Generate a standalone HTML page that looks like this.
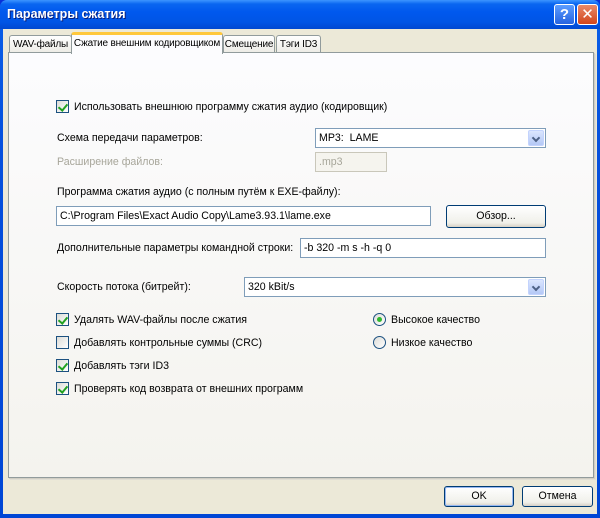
<!DOCTYPE html>
<html><head><meta charset="utf-8"><style>
*{margin:0;padding:0;box-sizing:border-box}
body{width:600px;height:518px;overflow:hidden;font-family:"Liberation Sans","DejaVu Sans",sans-serif;font-size:10.6px;color:#000;background:#0831d9}
.win{position:absolute;left:0;top:0;width:600px;height:518px;background:linear-gradient(#0a5fe8,#0550dd 30%,#0046d5);border-radius:7px 7px 0 0}
.title{position:absolute;left:0;top:0;width:600px;height:29px;background:linear-gradient(#3d95ff 0,#0a66f0 4px,#0058ee 12px,#0055e5 22px,#0048d0 29px);border-radius:7px 7px 0 0}
.title span{position:absolute;left:7px;top:7px;color:#fff;font-weight:bold;font-size:12.5px;text-shadow:1px 1px #0a1e78}
.tb{position:absolute;top:4px;width:21px;height:21px;border:1px solid #fff;border-radius:3px;color:#fff;font-weight:bold;text-align:center;font-size:15px;line-height:19px}
.client{position:absolute;left:3px;top:29px;width:594px;height:485px;background:#ece9d8}
.a{position:absolute;white-space:nowrap}
.page{position:absolute;left:8px;top:52px;width:586px;height:426px;background:linear-gradient(#fcfcfe,#f4f3ee);border:1px solid #919b9c;box-shadow:1px 1px 0 #d0cec4,2px 2px 0 #e0ded4}
.tab{position:absolute;top:35px;height:18px;border:1px solid #919b9c;border-bottom:none;border-radius:3px 3px 0 0;background:linear-gradient(#fff,#ecebe5);padding-top:3px;text-align:center;white-space:nowrap;font-size:10px;letter-spacing:-0.2px;overflow:hidden}
.tab.s{top:32px;height:22px;background:#fcfcfe;border-top:3px solid #ffc83c;padding-top:3px;z-index:2}
.cb{position:absolute;width:13px;height:13px;border:1px solid #1c5180;background:linear-gradient(135deg,#dcdcd7,#fff)}
.cb.c::after{content:"";position:absolute;left:3px;top:1px;width:4px;height:7px;border:solid #21a121;border-width:0 2px 2px 0;transform:rotate(40deg)}
.rd{position:absolute;width:13px;height:13px;border:1px solid #1c5180;border-radius:50%;background:linear-gradient(135deg,#dcdcd7,#fff)}
.rd.c::after{content:"";position:absolute;left:3px;top:3px;width:5px;height:5px;border-radius:50%;background:#2fb82f}
.ed{position:absolute;border:1px solid #7f9db9;background:#fff;padding:3px 0 0 3px;white-space:nowrap}
.dd{position:absolute;right:1px;top:1px;width:16px;height:16px;background:linear-gradient(#dbe6fe,#b4c8f6);border-radius:2px;border:1px solid #c3d3fd}
.dd::after{content:"";position:absolute;left:4px;top:4px;width:4px;height:4px;border:solid #4d6185;border-width:0 2px 2px 0;transform:rotate(45deg)}
.bt{position:absolute;border:1px solid #003c74;border-radius:3px;background:linear-gradient(#fff,#f0f0ea 80%,#d6d0c5);text-align:center}
</style></head><body>
<div class="win">
<div class="title"><span>Параметры сжатия</span>
<div class="tb" style="left:554px;background:linear-gradient(#5c9dff,#2663e0)">?</div>
<div class="tb" style="left:577px;background:linear-gradient(#e98a6a,#d2451c)">✕</div>
</div>
<div class="client"></div>
<div class="tab" style="left:9px;width:63px">WAV-файлы</div>
<div class="tab s" style="left:71px;width:152px">Сжатие внешним кодировщиком</div>
<div class="tab" style="left:223px;width:52px">Смещение</div>
<div class="tab" style="left:276px;width:45px">Тэги ID3</div>
<div class="page"></div>

<div class="cb c" style="left:56px;top:100px"></div><div class="a" style="left:74px;top:101px">Использовать внешнюю программу сжатия аудио (кодировщик)</div>
<div class="a" style="left:57px;top:132px">Схема передачи параметров:</div>
<div class="ed" style="left:315px;top:128px;width:231px;height:20px">MP3:&nbsp; LAME<div class="dd"></div></div>
<div class="a" style="left:57px;top:156px;color:#a7a69a">Расширение файлов:</div>
<div class="ed" style="left:315px;top:152px;width:72px;height:20px;background:#f5f4ee;border-color:#c9c7ba;color:#a7a69a">.mp3</div>
<div class="a" style="left:57px;top:186px">Программа сжатия аудио (с полным путём к EXE-файлу):</div>
<div class="ed" style="left:56px;top:206px;width:375px;height:20px">C:\Program Files\Exact Audio Copy\Lame3.93.1\lame.exe</div>
<div class="bt" style="left:446px;top:205px;width:100px;height:23px;line-height:21px">Обзор...</div>
<div class="a" style="left:57px;top:242px">Дополнительные параметры командной строки:</div>
<div class="ed" style="left:300px;top:238px;width:246px;height:20px">-b 320 -m s -h -q 0</div>
<div class="a" style="left:57px;top:281px">Скорость потока (битрейт):</div>
<div class="ed" style="left:244px;top:277px;width:302px;height:20px">320 kBit/s<div class="dd"></div></div>

<div class="cb c" style="left:56px;top:313px"></div><div class="a" style="left:74px;top:314px">Удалять WAV-файлы после сжатия</div>
<div class="cb" style="left:56px;top:336px"></div><div class="a" style="left:74px;top:337px">Добавлять контрольные суммы (CRC)</div>
<div class="cb c" style="left:56px;top:359px"></div><div class="a" style="left:74px;top:360px">Добавлять тэги ID3</div>
<div class="cb c" style="left:56px;top:382px"></div><div class="a" style="left:74px;top:383px">Проверять код возврата от внешних программ</div>
<div class="rd c" style="left:373px;top:313px"></div><div class="a" style="left:391px;top:314px">Высокое качество</div>
<div class="rd" style="left:373px;top:336px"></div><div class="a" style="left:391px;top:337px">Низкое качество</div>

<div class="bt" style="left:444px;top:486px;width:70px;height:21px;line-height:19px;box-shadow:inset 0 0 0 1px #97b8f1">OK</div>
<div class="bt" style="left:522px;top:486px;width:71px;height:21px;line-height:19px">Отмена</div>
</div>
</body></html>
